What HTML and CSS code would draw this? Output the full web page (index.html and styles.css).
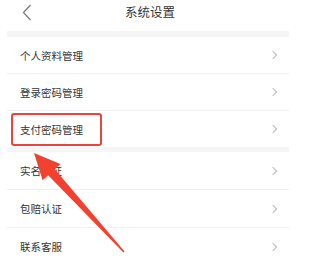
FILE: index.html
```html
<!DOCTYPE html>
<html lang="zh">
<head>
<meta charset="utf-8">
<link rel="stylesheet" href="styles.css">
</head>
<body>
<div class="page">
  <header class="topbar">
    <svg class="back" width="10" height="17" viewBox="0 0 10 17"><path d="M8.5 1 L1.5 8.5 L8.5 16" fill="none" stroke="#777" stroke-width="1.2"/></svg>
    <div class="title">系统设置</div>
  </header>
  <div class="content">
    <div class="band"></div>
    <div class="row"><span>个人资料管理</span><i class="chev"></i></div>
    <div class="row"><span>登录密码管理</span><i class="chev"></i></div>
    <div class="row last"><span>支付密码管理</span><i class="chev"></i></div>
    <div class="band small"></div>
    <div class="row tall"><span>实名认证</span><i class="chev"></i></div>
    <div class="row tall"><span>包赔认证</span><i class="chev"></i></div>
    <div class="row tall"><span>联系客服</span><i class="chev"></i></div>
  </div>
  <div class="highlight"></div>
  <svg class="arrow" width="289" height="260" viewBox="0 0 289 260"><polygon points="34,153 60.4,164.1 54.8,169.2 124.6,251.5 123.4,252.5 48.2,175.2 42.6,180.3" fill="#f2412e"/></svg>
</div>
</body>
</html>
```
FILE: styles.css
```css
html, body { margin: 0; padding: 0; background: #fff; }
body { font-family: "Noto Sans CJK SC", "Noto Sans", sans-serif; color: #333; overflow: hidden; }
.page { position: relative; width: 289px; height: 260px; overflow: hidden; }
.topbar { height: 31px; display: flex; align-items: center; position: relative; }
.back { margin-left: 22px; margin-top: -6px; }
.title { position: absolute; left: 125px; top: 4px; font-size: 12.5px; line-height: 16px; color: #333; }
.content { margin-left: 7px; }
.band { height: 6px; background: #f5f5f5; }
.band.small { height: 5px; }
.row { height: 36px; display: flex; align-items: center; justify-content: space-between; padding-left: 13px; padding-right: 11px; border-bottom: 1px solid #f0f0f0; font-size: 10.5px; color: #333; }
.row.tall { height: 37px; }
.row.last { border-bottom: none; }
.chev { width: 5px; height: 5px; border-top: 1px solid #bbb; border-right: 1px solid #bbb; transform: rotate(45deg); margin-right: 2px; }
.highlight { position: absolute; left: 11px; top: 113px; width: 87px; height: 29px; border: 2px solid #e8453c; border-radius: 3px; }
.arrow { position: absolute; left: 0; top: 0; }
```
